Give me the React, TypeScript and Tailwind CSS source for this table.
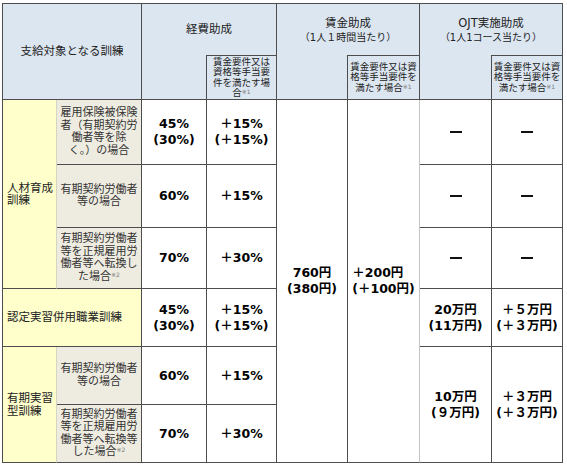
import type { ReactNode } from 'react'

const dark = 'border-[#4d4d4d]'

function Cell({ className, children }: { className: string; children?: ReactNode }) {
  return (
    <div className={`flex items-center justify-center text-center border-r border-b ${dark} ${className}`}>
      {children}
    </div>
  )
}

function Note({ n }: { n: string }) {
  return <span className="align-top text-[6px] leading-[8px] text-[#777]">※{n}</span>
}

function Num({ a, b }: { a: string; b?: string }) {
  return (
    <div className="font-bold text-[12.5px] leading-[16px] text-black">
      <div>{a}</div>
      {b && <div>{b}</div>}
    </div>
  )
}

const hdr = 'bg-[#dce6f1]'
const yel = 'bg-[#ffffcc]'
const bei = 'bg-[#eeece1]'
const sub = 'text-[9.5px] leading-[10.5px] text-[#222]'
const body = 'text-[11px] leading-[12.5px] text-[#333]'
const dash = <span className="inline-block w-[12px] h-[2px] bg-[#111]" />

export default function App() {
  return (
    <div className="bg-white w-[567px] h-[467px] pl-[2px] pt-[3px] font-['DejaVu_Sans','Noto_Sans_CJK_JP',sans-serif]">
      <div
        className={`grid grid-cols-[54px_85px_65px_70px_71px_72px_72px_71px] grid-rows-[51px_45px_65px_63px_61px_58px_58px_58px] w-[561px] border-l border-t ${dark}`}
      >
        {/* Header */}
        <Cell className={`col-start-1 col-span-2 row-start-1 row-span-2 ${hdr} text-[11.5px] text-[#222]`}>
          支給対象となる訓練
        </Cell>
        <div className={`col-start-3 col-span-2 row-start-1 flex items-center justify-center border-r ${dark} ${hdr} text-[11.5px] text-[#222]`}>
          経費助成
        </div>
        <Cell className={`col-start-3 row-start-2 ${hdr}`} />
        <Cell className={`col-start-4 row-start-2 border-t ${hdr} ${sub}`}>
          <div>
            賃金要件又は
            <br />
            資格等手当要
            <br />
            件を満たす場
            <br />
            合<Note n="1" />
          </div>
        </Cell>

        <div className={`col-start-5 col-span-2 row-start-1 flex flex-col items-center justify-center border-r ${dark} ${hdr} text-[#222]`}>
          <div className="text-[11.5px] leading-[15px]">賃金助成</div>
          <div className="text-[10px] leading-[13px]">（1人１時間当たり）</div>
        </div>
        <Cell className={`col-start-5 row-start-2 ${hdr}`} />
        <Cell className={`col-start-6 row-start-2 border-t ${hdr} ${sub}`}>
          <div>
            賃金要件又は資
            <br />
            格等手当要件を
            <br />
            満たす場合<Note n="1" />
          </div>
        </Cell>

        <div className={`col-start-7 col-span-2 row-start-1 flex flex-col items-center justify-center border-r ${dark} ${hdr} text-[#222]`}>
          <div className="text-[11.5px] leading-[15px]">OJT実施助成</div>
          <div className="text-[10px] leading-[13px]">（1人1コース当たり）</div>
        </div>
        <Cell className={`col-start-7 row-start-2 ${hdr}`} />
        <Cell className={`col-start-8 row-start-2 border-t ${hdr} ${sub}`}>
          <div>
            賃金要件又は資
            <br />
            格等手当要件を
            <br />
            満たす場合<Note n="1" />
          </div>
        </Cell>

        {/* 人材育成訓練 */}
        <div className={`col-start-1 row-start-3 row-span-3 flex items-center pl-[4px] border-b ${dark} border-r-[1px] border-r-[#d6d6c0] ${yel} text-[11.5px] leading-[12.5px] text-[#222]`}>
          <div>
            人材育成
            <br />
            訓練
          </div>
        </div>
        <Cell className={`col-start-2 row-start-3 ${bei} ${body}`}>
          <div>
            雇用保険被保険
            <br />
            者（有期契約労
            <br />
            働者等を除
            <br />
            く。）の場合
          </div>
        </Cell>
        <Cell className="col-start-3 row-start-3">
          <Num a="45%" b="(30%)" />
        </Cell>
        <Cell className="col-start-4 row-start-3">
          <Num a="＋15%" b="(＋15%)" />
        </Cell>

        <Cell className={`col-start-2 row-start-4 ${bei} ${body}`}>
          <div>
            有期契約労働者
            <br />
            等の場合
          </div>
        </Cell>
        <Cell className="col-start-3 row-start-4">
          <Num a="60%" />
        </Cell>
        <Cell className="col-start-4 row-start-4">
          <Num a="＋15%" />
        </Cell>

        <Cell className={`col-start-2 row-start-5 ${bei} ${body}`}>
          <div>
            有期契約労働者
            <br />
            等を正規雇用労
            <br />
            働者等へ転換し
            <br />
            た場合<Note n="2" />
          </div>
        </Cell>
        <Cell className="col-start-3 row-start-5">
          <Num a="70%" />
        </Cell>
        <Cell className="col-start-4 row-start-5">
          <Num a="＋30%" />
        </Cell>

        {/* 賃金助成 */}
        <Cell className="col-start-5 row-start-3 row-span-6">
          <Num a="760円" b="(380円)" />
        </Cell>
        <div className={`col-start-6 row-start-3 row-span-6 flex items-center justify-center border-b ${dark} border-r border-r-[#c4c4c4]`}>
          <Num a="＋200円" b="(＋100円)" />
        </div>

        {/* OJT */}
        <Cell className="col-start-7 row-start-3">{dash}</Cell>
        <Cell className="col-start-8 row-start-3">{dash}</Cell>
        <Cell className="col-start-7 row-start-4">{dash}</Cell>
        <Cell className="col-start-8 row-start-4">{dash}</Cell>
        <Cell className="col-start-7 row-start-5">{dash}</Cell>
        <Cell className="col-start-8 row-start-5">{dash}</Cell>

        {/* 認定実習併用職業訓練 */}
        <div className={`col-start-1 col-span-2 row-start-6 flex items-center pl-[4px] border-r border-b ${dark} ${yel} text-[11.5px] text-[#222]`}>
          認定実習併用職業訓練
        </div>
        <Cell className="col-start-3 row-start-6">
          <Num a="45%" b="(30%)" />
        </Cell>
        <Cell className="col-start-4 row-start-6">
          <Num a="＋15%" b="(＋15%)" />
        </Cell>
        <Cell className="col-start-7 row-start-6">
          <Num a="20万円" b="(11万円)" />
        </Cell>
        <Cell className="col-start-8 row-start-6">
          <Num a="＋５万円" b="(＋３万円)" />
        </Cell>

        {/* 有期実習型訓練 */}
        <div className={`col-start-1 row-start-7 row-span-2 flex items-center pl-[4px] border-b ${dark} border-r-[1px] border-r-[#d6d6c0] ${yel} text-[11.5px] leading-[12.5px] text-[#222]`}>
          <div>
            有期実習
            <br />
            型訓練
          </div>
        </div>
        <Cell className={`col-start-2 row-start-7 ${bei} ${body}`}>
          <div>
            有期契約労働者
            <br />
            等の場合
          </div>
        </Cell>
        <Cell className="col-start-3 row-start-7">
          <Num a="60%" />
        </Cell>
        <Cell className="col-start-4 row-start-7">
          <Num a="＋15%" />
        </Cell>
        <Cell className={`col-start-2 row-start-8 ${bei} ${body}`}>
          <div>
            有期契約労働者
            <br />
            等を正規雇用労
            <br />
            働者等へ転換等
            <br />
            した場合<Note n="2" />
          </div>
        </Cell>
        <Cell className="col-start-3 row-start-8">
          <Num a="70%" />
        </Cell>
        <Cell className="col-start-4 row-start-8">
          <Num a="＋30%" />
        </Cell>
        <Cell className="col-start-7 row-start-7 row-span-2">
          <Num a="10万円" b="(９万円)" />
        </Cell>
        <Cell className="col-start-8 row-start-7 row-span-2">
          <Num a="＋３万円" b="(＋３万円)" />
        </Cell>
      </div>
    </div>
  )
}
